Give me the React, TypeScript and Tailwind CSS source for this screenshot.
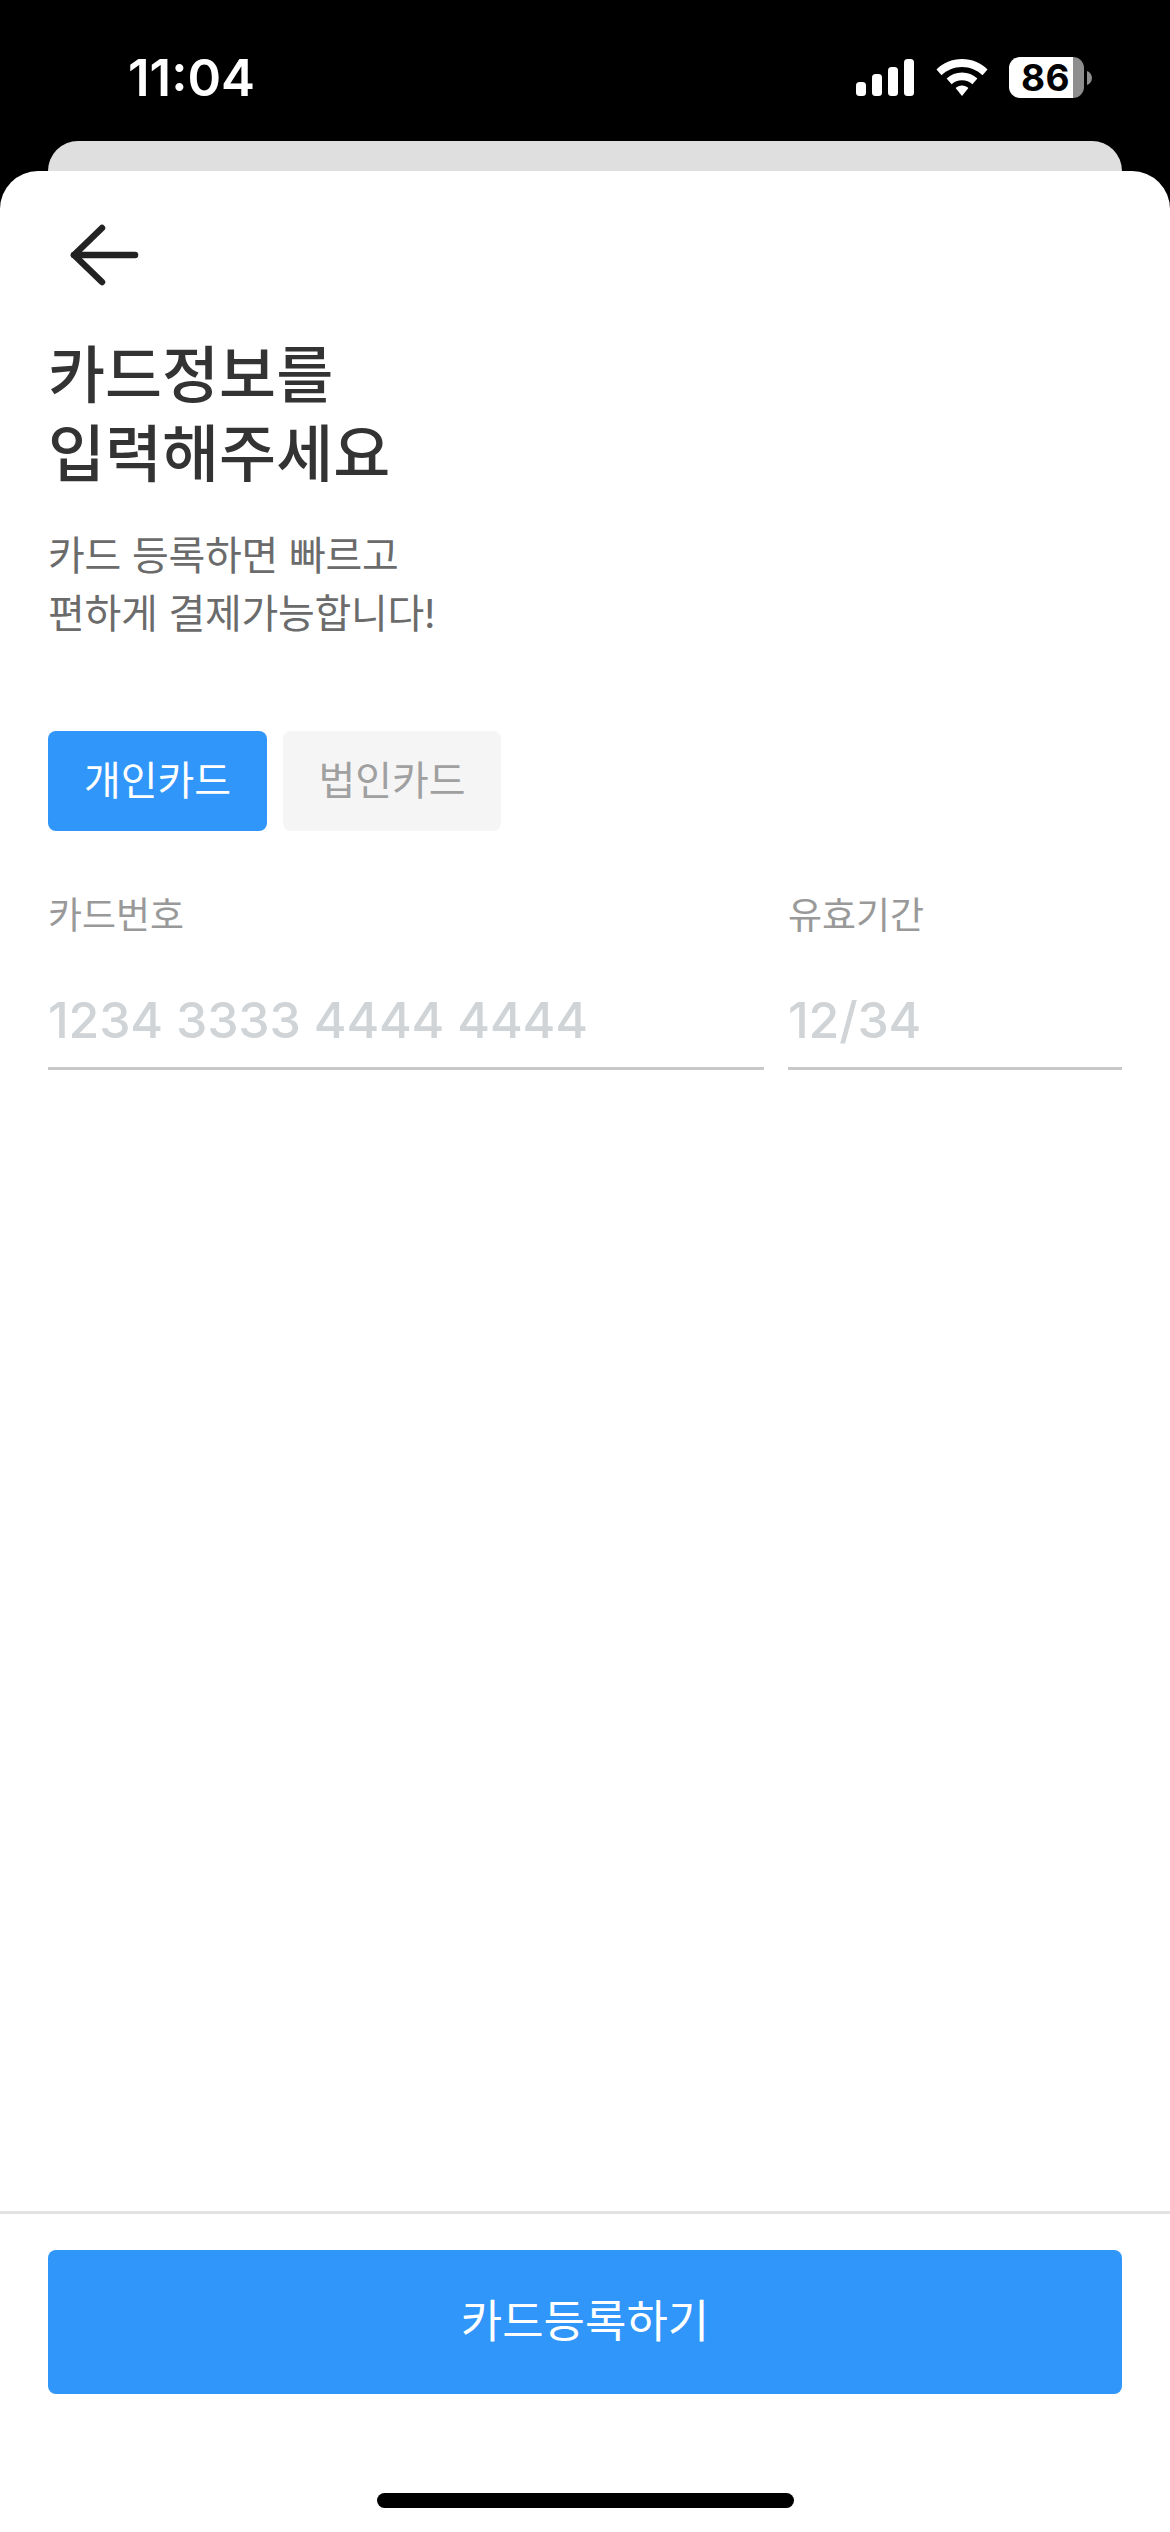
import React from 'react';

const kr = "font-['Inter','Noto_Sans_CJK_KR',sans-serif]";

function SignalIcon() {
  return (
    <svg width="58" height="37" viewBox="0 0 58 37" fill="white">
      <rect x="0" y="23" width="10" height="14" rx="3.5" />
      <rect x="16" y="15" width="10" height="22" rx="3.5" />
      <rect x="32" y="8" width="10" height="29" rx="3.5" />
      <rect x="48" y="0" width="10" height="37" rx="3.5" />
    </svg>
  );
}

function WifiIcon() {
  return (
    <svg width="52" height="37" viewBox="0 0 52 37" fill="white">
      <path d="M26 0C16 0 7.2 3.9 0.5 10.4L5.5 16.2C10.8 11 18 7.9 26 7.9C34 7.9 41.2 11 46.5 16.2L51.5 10.4C44.8 3.9 36 0 26 0Z" />
      <path d="M26 13.4C20.1 13.4 14.8 15.6 10.6 19.5L15.6 25.2C18.4 22.7 22 21.2 26 21.2C30 21.2 33.6 22.7 36.4 25.2L41.4 19.5C37.2 15.6 31.9 13.4 26 13.4Z" />
      <path d="M26 26.6C23.5 26.6 21.3 27.5 19.6 29L26 37L32.4 29C30.7 27.5 28.5 26.6 26 26.6Z" />
    </svg>
  );
}

function Battery() {
  return (
    <div className="-ml-[1px] flex items-center gap-[3px]">
      <div className="relative w-[75px] h-[41px] flex">
        <div className="w-[64px] bg-white rounded-l-[11px]" />
        <div className="flex-1 bg-[#8e8e8e] rounded-r-[11px]" />
        <span className="absolute left-[12px] top-[2px] font-['Inter',sans-serif] font-bold text-[37px] leading-[37px] text-black tracking-[0.5px]">
          86
        </span>
      </div>
      <svg width="5" height="14" viewBox="0 0 5 14" fill="#8e8e8e">
        <path d="M0 0C3 1 5 4 5 7C5 10 3 13 0 14Z" />
      </svg>
    </div>
  );
}

function BackArrow() {
  return (
    <svg width="74" height="64" viewBox="0 0 74 64" fill="none" stroke="#222222" strokeWidth="6.5" strokeLinecap="round" strokeLinejoin="round">
      <path d="M6 32H67" />
      <path d="M34 5L6 32L34 59" />
    </svg>
  );
}

function Field({ label, placeholder, className }: { label: string; placeholder: string; className: string }) {
  return (
    <div className={`flex flex-col ${className}`}>
      <label className="text-[37px] leading-[44px] text-[#999999]">{label}</label>
      <input
        readOnly
        placeholder={placeholder}
        className="mt-[49px] h-[83px] pb-[14px] w-full border-b-[3px] border-[#c8c8c8] bg-transparent text-[50px] tracking-[-0.2px] font-medium outline-none placeholder:text-[#d0d4d7]"
      />
    </div>
  );
}

export default function App() {
  return (
    <div className={`w-[1170px] h-[2532px] bg-black flex flex-col overflow-hidden ${kr}`}>
      <div className="h-[141px] shrink-0 flex items-start justify-between pl-[128px] pr-[78px] pt-[48px]">
        <span className="text-[51px] leading-[60px] font-semibold text-white">11:04</span>
        <div className="flex items-center gap-[22px] pt-[9px]">
          <SignalIcon />
          <WifiIcon />
          <Battery />
        </div>
      </div>
      <div className="h-[30px] shrink-0 mx-[48px] bg-[#dfdfdf] rounded-t-[30px]" />
      <div className="flex-1 bg-white rounded-t-[38px] flex flex-col">
        <div className="pl-[68px] pt-[52px]">
          <BackArrow />
        </div>
        <div className="px-[48px]">
          <h1 className="mt-[49px] text-[62px] leading-[79px] font-medium text-[#333333]">
            카드정보를
            <br />
            입력해주세요
          </h1>
          <p className="mt-[33px] text-[40px] leading-[58px] tracking-[-0.3px] text-[#6b6b6b]">
            카드 등록하면 빠르고
            <br />
            편하게 결제가능합니다!
          </p>
          <div className="mt-[88px] flex gap-[16px]">
            <button className="w-[219px] h-[100px] rounded-[8px] bg-[#3096fa] text-[40px] text-white">개인카드</button>
            <button className="w-[218px] h-[100px] rounded-[8px] bg-[#f5f5f5] text-[40px] text-[#a0a0a0]">법인카드</button>
          </div>
          <div className="mt-[63px] flex gap-[24px]">
            <Field label="카드번호" placeholder="1234 3333 4444 4444" className="w-[716px]" />
            <Field label="유효기간" placeholder="12/34" className="w-[334px]" />
          </div>
        </div>
        <div className="mt-auto border-t-[3px] border-[#e2e2e2] px-[48px] pt-[36px]">
          <button className="w-full h-[144px] rounded-[8px] bg-[#3096fa] text-[45px] text-white">카드등록하기</button>
          <div className="mt-[99px] mb-[24px] mx-auto w-[417px] h-[15px] rounded-full bg-black" />
        </div>
      </div>
    </div>
  );
}
